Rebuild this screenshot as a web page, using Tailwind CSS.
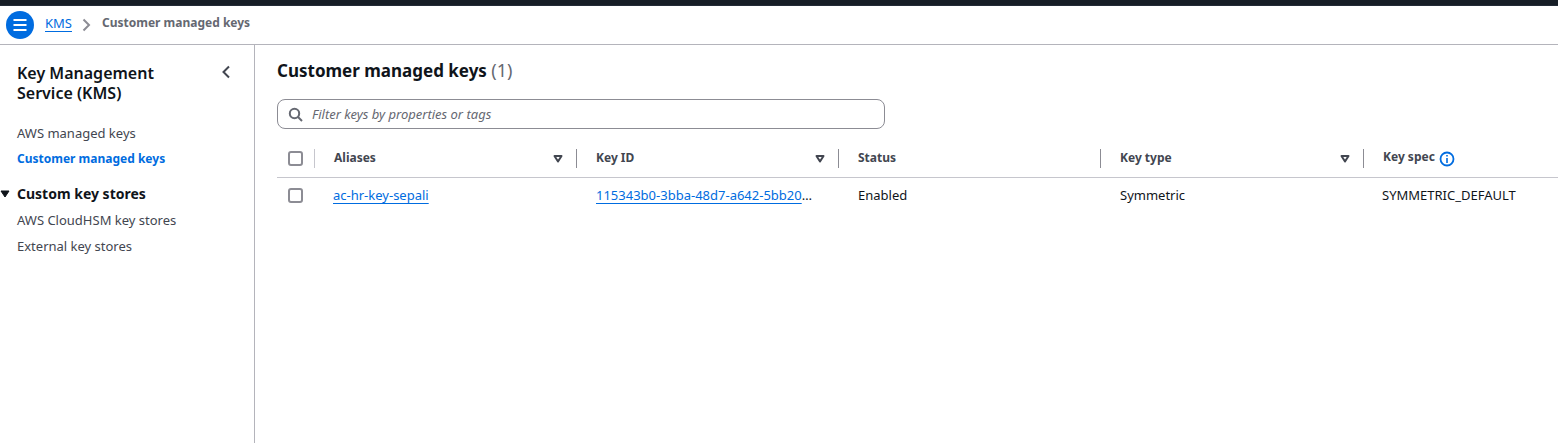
<!DOCTYPE html>
<html lang="en">
<head>
<meta charset="utf-8">
<title>Customer managed keys</title>
<script src="https://cdn.jsdelivr.net/npm/@tailwindcss/browser@4"></script>
</head>
<body class="flex min-h-screen flex-col overflow-x-hidden bg-white font-['Noto_Sans','Open_Sans',sans-serif] text-[13px] leading-5 text-[#0f141a]">
<div class="h-[6px] border-b border-[#232b37] bg-[#161d26]"></div>
<header class="flex h-[39px] items-center border-b border-[#b4b4bb] pl-[6px]">
  <button type="button" aria-label="Open navigation" class="flex size-7 items-center justify-center rounded-full bg-[#006ce0]">
    <svg class="size-4" viewBox="0 0 16 16" stroke="#fff" stroke-width="2"><path d="M1.500 3h13M1.500 8h13M1.500 13h13"/></svg>
  </button>
  <nav aria-label="Breadcrumbs" class="flex items-center pl-[11px] pb-1">
    <a href="#" class="text-[#006ce0] underline underline-offset-3">KMS</a>
    <svg class="ml-[9px] mt-[3px] h-4 w-3" viewBox="0 0 12 16" fill="none" stroke="#8c8c94" stroke-width="2"><path d="M2.500 2.500l5.500 5.500-5.500 5.500"/></svg>
    <span class="ml-[9px] text-xs leading-5 font-bold text-[#656871]">Customer managed keys</span>
  </nav>
</header>
<div class="flex flex-1">
  <aside class="w-[255px] shrink-0 border-r border-[#b4b4bb] pt-[18px]">
    <div class="flex items-start justify-between pl-[17px] pr-[22px]">
      <h2 class="w-[160px] text-base leading-5 font-semibold">Key Management Service (KMS)</h2>
      <button type="button" aria-label="Close navigation" class="mt-px">
        <svg class="h-4 w-3" viewBox="0 0 12 16" fill="none" stroke="#424650" stroke-width="2"><path d="M9 2.500L3.500 8 9 13.500"/></svg>
      </button>
    </div>
    <nav class="pt-[20px] text-[#424650]">
      <ul class="flex flex-col gap-[6px] pl-[17px]">
        <li><a href="#">AWS managed keys</a></li>
        <li class="text-xs leading-5"><a href="#" aria-current="page" class="font-bold text-[#006ce0]">Customer managed keys</a></li>
      </ul>
      <button type="button" aria-expanded="true" class="mt-[15px] flex items-center text-sm font-bold text-[#0f141a]">
        <svg class="mr-[7px] h-[8px] w-[10px]" viewBox="0 0 10 8"><path d="M1 1h8L5 7z" fill="#0f141a" stroke="#0f141a" stroke-linejoin="round"/></svg>
        Custom key stores
      </button>
      <ul class="mt-[6px] flex flex-col gap-[6px] pl-[17px]">
        <li><a href="#">AWS CloudHSM key stores</a></li>
        <li><a href="#">External key stores</a></li>
      </ul>
    </nav>
  </aside>
  <main class="min-w-0 flex-1 pl-[22px] pt-[13px]">
    <h1 class="text-[17px] leading-6 font-bold">Customer managed keys <span class="text-lg leading-6 font-normal text-[#656871]">(1)</span></h1>
    <label class="mt-4 flex h-[30px] w-[608px] max-w-full items-center rounded-[8px] border border-[#8c8c94] pl-[10px]">
      <svg class="mr-2 size-4" viewBox="0 0 16 16" fill="none" stroke="#656871" stroke-width="2"><circle cx="6.500" cy="7.500" r="4.700"/><path d="M10 11l4 4"/></svg>
      <input type="search" aria-label="Filter keys" placeholder="Filter keys by properties or tags" class="min-w-0 flex-1 bg-transparent outline-none placeholder:text-[#656871] placeholder:italic">
    </label>
    <table class="mt-[11px] w-full min-w-[1281px] table-fixed border-collapse text-left">
      <colgroup><col class="w-[38px]"><col class="w-[262px]"><col class="w-[262px]"><col class="w-[262px]"><col class="w-[263px]"><col></colgroup>
      <thead class="text-xs leading-5 text-[#424650]">
        <tr class="h-[37px] border-b border-[#c6c6cd]">
          <th class="p-0"><div class="flex h-[19px] items-center border-r border-[#c6c6cd] pl-[11px]"><input type="checkbox" aria-label="Select all keys" class="size-[15px] appearance-none rounded-[3px] border-2 border-[#8c8c94]"></div></th>
          <th class="p-0"><div class="flex h-[19px] items-center justify-between border-r border-[#8c8c94] pl-[19px] pr-[13px]">Aliases<button type="button" aria-label="Sort by alias"><svg class="h-[9px] w-[10px]" viewBox="0 0 10 9"><path d="M1.500 2h7L5 7.500z" fill="none" stroke="#424650" stroke-width="2" stroke-linejoin="round"/></svg></button></div></th>
          <th class="p-0"><div class="flex h-[19px] items-center justify-between border-r border-[#8c8c94] pl-[19px] pr-[13px]">Key ID<button type="button" aria-label="Sort by key ID"><svg class="h-[9px] w-[10px]" viewBox="0 0 10 9"><path d="M1.500 2h7L5 7.500z" fill="none" stroke="#424650" stroke-width="2" stroke-linejoin="round"/></svg></button></div></th>
          <th class="p-0"><div class="flex h-[19px] items-center border-r border-[#8c8c94] pl-[19px]">Status</div></th>
          <th class="p-0"><div class="flex h-[19px] items-center justify-between border-r border-[#8c8c94] pl-[19px] pr-[13px]">Key type<button type="button" aria-label="Sort by key type"><svg class="h-[9px] w-[10px]" viewBox="0 0 10 9"><path d="M1.500 2h7L5 7.500z" fill="none" stroke="#424650" stroke-width="2" stroke-linejoin="round"/></svg></button></div></th>
          <th class="p-0"><div class="flex h-[19px] items-center gap-1 pl-[19px]"><span class="pb-[2px]">Key spec</span><button type="button" aria-label="Key spec info" class="mt-[2px]"><svg class="size-4" viewBox="0 0 16 16" fill="none" stroke="#006ce0"><circle cx="8" cy="8" r="6.500" stroke-width="1.800"/><path d="M8 4v1.600M8 7v5" stroke-width="1.600"/></svg></button></div></th>
        </tr>
      </thead>
      <tbody>
        <tr class="h-[36px]">
          <td class="p-0"><div class="flex pl-[11px]"><input type="checkbox" aria-label="Select ac-hr-key-sepali" class="size-[15px] appearance-none rounded-[3px] border-2 border-[#8c8c94]"></div></td>
          <td class="p-0 pl-[18px]"><a href="#" class="text-[#006ce0] underline underline-offset-3">ac-hr-key-sepali</a></td>
          <td class="p-0 pl-[19px]"><a href="#" class="text-[#006ce0] underline underline-offset-3">115343b0-3bba-48d7-a642-5bb20</a>…</td>
          <td class="p-0 pl-[19px]">Enabled</td>
          <td class="p-0 pl-[19px]">Symmetric</td>
          <td class="p-0 pl-[18px]">SYMMETRIC_DEFAULT</td>
        </tr>
      </tbody>
    </table>
  </main>
</div>
</body>
</html>
